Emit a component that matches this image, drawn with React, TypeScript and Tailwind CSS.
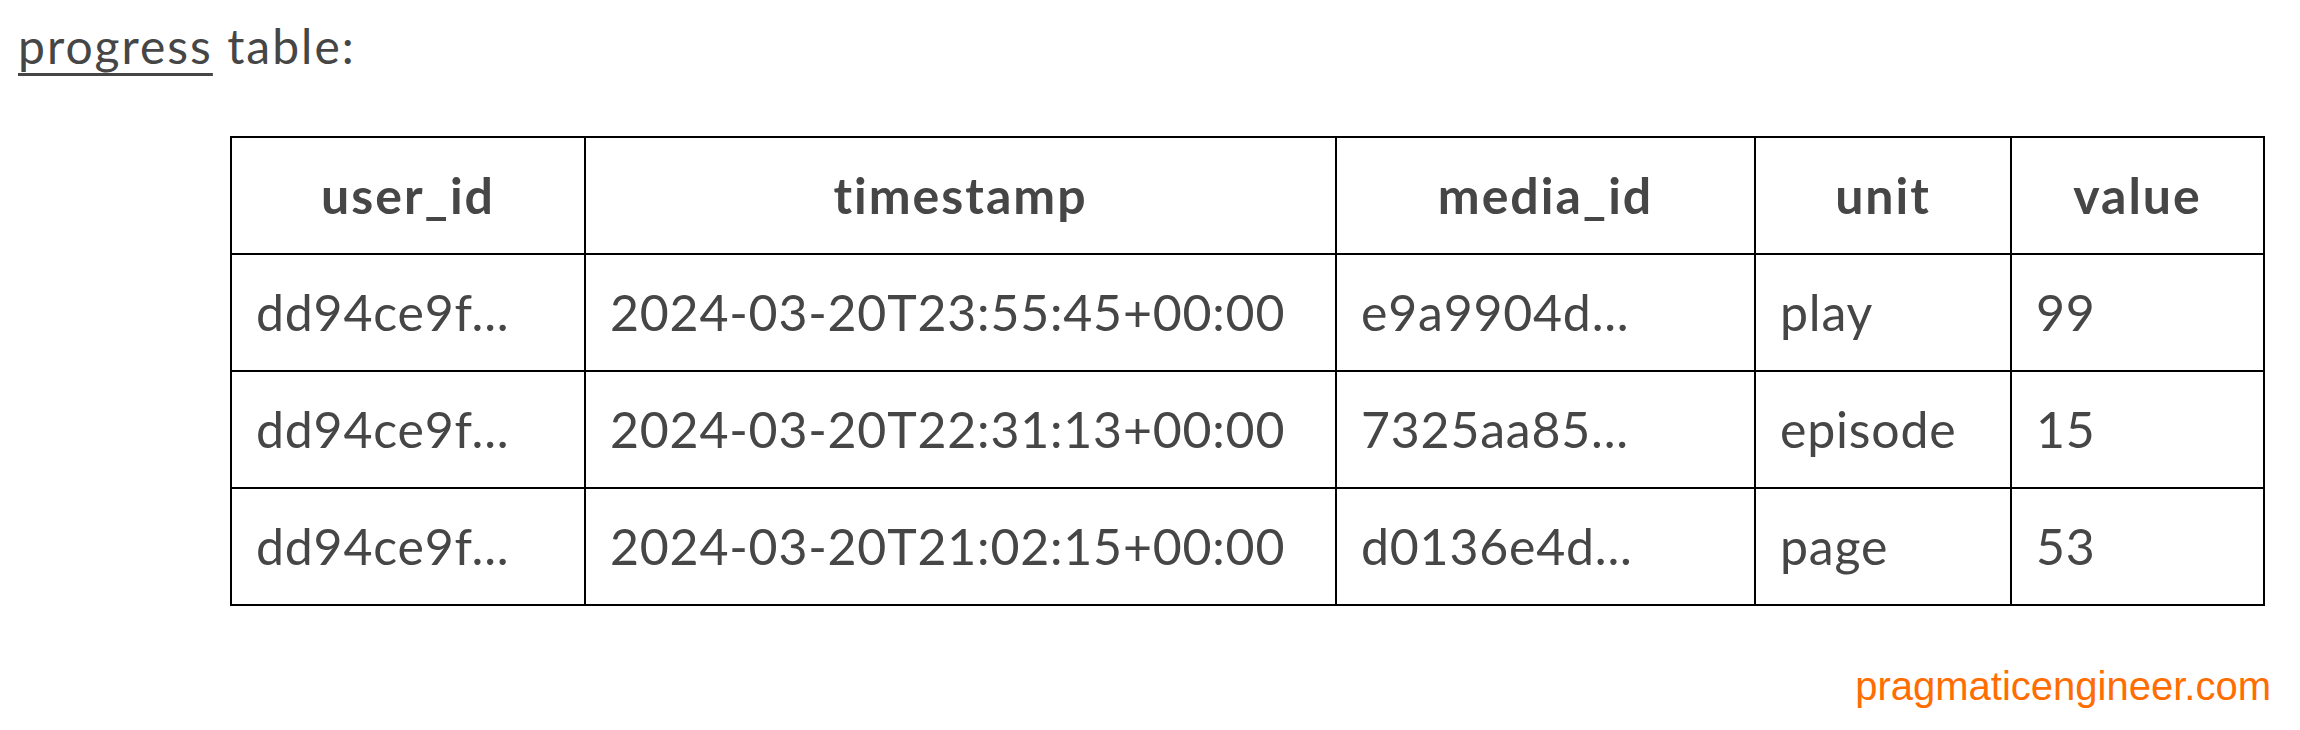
const rows = [
  ["dd94ce9f...", "2024-03-20T23:55:45+00:00", "e9a9904d...", "play", "99"],
  ["dd94ce9f...", "2024-03-20T22:31:13+00:00", "7325aa85...", "episode", "15"],
  ["dd94ce9f...", "2024-03-20T21:02:15+00:00", "d0136e4d...", "page", "53"],
]

export default function App() {
  return (
    <div className="w-[2300px] h-[730px] bg-white text-[#464646] font-['Lato','Open_Sans',sans-serif] px-[18px] pt-[22px]">
      <p className="text-[48px] leading-none tracking-[2px]">
        <span className="underline decoration-[3px] underline-offset-[9px]">progress</span> table:
      </p>
      <table className="ml-[212px] mt-[66px] border-collapse text-[50px]">
        <thead>
          <tr className="h-[117px]">
            <th className="w-[354px] border-[2px] border-black font-bold tracking-[2px]">user_id</th>
            <th className="w-[751px] border-[2px] border-black font-bold tracking-[2px]">timestamp</th>
            <th className="w-[419px] border-[2px] border-black font-bold tracking-[2px]">media_id</th>
            <th className="w-[256px] border-[2px] border-black font-bold tracking-[2px]">unit</th>
            <th className="w-[253px] border-[2px] border-black font-bold tracking-[2px]">value</th>
          </tr>
        </thead>
        <tbody>
          {rows.map((r, i) => (
            <tr key={i} className="h-[117px]">
              {r.map((c, j) => (
                <td key={j} className="border-[2px] border-black pl-[24px] tracking-[0.8px]">
                  {c}
                </td>
              ))}
            </tr>
          ))}
        </tbody>
      </table>
      <div className="flex justify-end pr-[11px] mt-[60px]">
        <span className="font-['Liberation_Sans',Arial,sans-serif] text-[40px] leading-none text-[#ff6d00]">
          pragmaticengineer.com
        </span>
      </div>
    </div>
  )
}
